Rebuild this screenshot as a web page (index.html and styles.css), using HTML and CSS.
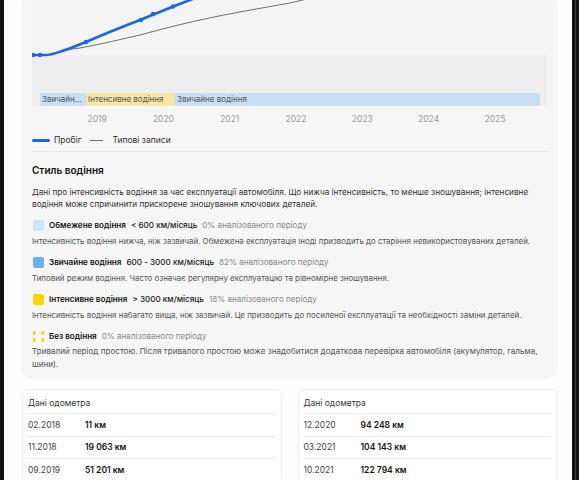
FILE: index.html
```html
<!DOCTYPE html>
<html lang="uk">
<head>
<meta charset="utf-8">
<title>Пробіг</title>
<link rel="stylesheet" href="styles.css">
</head>
<body>
<div class="frame">
  <div class="edge-l"></div>
  <main class="page">
    <section class="card chart-card">
      <div class="plot">
        <svg class="lines" width="514" height="93" viewBox="0 0 514 93">
          <path d="M23 53 C 33 50, 40 49, 48 48 C 70 44, 90 39, 108 35 C 130 29, 150 24, 168 20 C 200 13, 230 8, 258 3 L 275 -1" fill="none" stroke="#6f6f6f" stroke-width="1"/>
          <path d="M0 55 L 13 55 C 20 55, 24 53, 30 51 C 40 48, 46 45, 54 42 C 70 35, 90 27, 108 20 C 118 16, 130 11, 140 7 C 150 3, 158 0, 166 -3" fill="none" stroke="#1666ee" stroke-width="2.6" stroke-linecap="round"/>
          <g fill="#1666ee">
            <circle cx="1" cy="55" r="2.2"/>
            <circle cx="8" cy="55" r="2.2"/>
            <circle cx="54" cy="42" r="2.2"/>
            <circle cx="109" cy="20" r="2.2"/>
            <circle cx="121" cy="14" r="2.2"/>
            <circle cx="141" cy="6.5" r="2.2"/>
          </g>
        </svg>
        <div class="band">
          <span class="seg seg-normal seg-a">Звичайне водіння</span>
          <span class="seg seg-int seg-b">Інтенсивне водіння</span>
          <span class="seg seg-normal seg-c">Звичайне водіння</span>
        </div>
      </div>
      <div class="years">
        <span>2019</span><span>2020</span><span>2021</span><span>2022</span><span>2023</span><span>2024</span><span>2025</span>
      </div>
      <div class="legend">
        <span class="lg-item"><i class="lg-line lg-blue"></i>Пробіг</span>
        <span class="lg-item"><i class="lg-line lg-grey"></i>Типові записи</span>
      </div>
      <div class="style">
        <h2 class="style-title">Стиль водіння</h2>
        <p class="style-desc">Дані про інтенсивність водіння за час експлуатації автомобіля. Що нижча інтенсивність, то менше зношування; інтенсивне водіння може спричинити прискорене зношування ключових деталей.</p>
        <div class="item">
          <div class="item-head"><i class="sw sw-low"></i><b>Обмежене водіння</b><span class="range">&lt; 600 км/місяць</span><span class="pct">0% аналізованого періоду</span></div>
          <p class="item-desc">Інтенсивність водіння нижча, ніж зазвичай. Обмежена експлуатація іноді призводить до старіння невикористовуваних деталей.</p>
        </div>
        <div class="item">
          <div class="item-head"><i class="sw sw-norm"></i><b>Звичайне водіння</b><span class="range">600 - 3000 км/місяць</span><span class="pct">82% аналізованого періоду</span></div>
          <p class="item-desc">Типовий режим водіння. Часто означає регулярну експлуатацію та рівномірне зношування.</p>
        </div>
        <div class="item">
          <div class="item-head"><i class="sw sw-int"></i><b>Інтенсивне водіння</b><span class="range">&gt; 3000 км/місяць</span><span class="pct">18% аналізованого періоду</span></div>
          <p class="item-desc">Інтенсивність водіння набагато вища, ніж зазвичай. Це призводить до посиленої експлуатації та необхідності заміни деталей.</p>
        </div>
        <div class="item">
          <div class="item-head"><svg class="sw sw-none" width="11" height="11" viewBox="0 0 11 11"><g fill="#fbd500"><rect x="0" y="0" width="2.5" height="3.8"/><rect x="0" y="7.2" width="2.5" height="3.8"/><rect x="8.5" y="0" width="2.5" height="3.8"/><rect x="8.5" y="7.2" width="2.5" height="3.8"/></g></svg><b>Без водіння</b><span class="pct">0% аналізованого періоду</span></div>
          <p class="item-desc item-desc-last">Тривалий період простою. Після тривалого простою може знадобитися додаткова перевірка автомобіля (акумулятор, гальма, шини).</p>
        </div>
      </div>
    </section>
    <div class="odo-grid">
      <section class="odo">
        <div class="odo-head">Дані одометра</div>
        <div class="odo-row"><span class="odo-date">02.2018</span><span class="odo-val">11 км</span></div>
        <div class="odo-row"><span class="odo-date">11.2018</span><span class="odo-val">19 063 км</span></div>
        <div class="odo-row"><span class="odo-date">09.2019</span><span class="odo-val">51 201 км</span></div>
      </section>
      <section class="odo">
        <div class="odo-head">Дані одометра</div>
        <div class="odo-row"><span class="odo-date">12.2020</span><span class="odo-val">94 248 км</span></div>
        <div class="odo-row"><span class="odo-date">03.2021</span><span class="odo-val">104 143 км</span></div>
        <div class="odo-row"><span class="odo-date">10.2021</span><span class="odo-val">122 794 км</span></div>
      </section>
    </div>
  </main>
  <div class="edge-r"></div>
</div>
</body>
</html>
```

FILE: styles.css
```css
* { box-sizing: border-box; }
html, body { margin: 0; padding: 0; }
body {
  font-family: Inter, "Noto Sans", "DejaVu Sans", sans-serif;
  color: #222;
  background: #fff;
  width: 579px;
  height: 480px;
  overflow: hidden;
}
.frame {
  display: flex;
  height: 480px;
}
.edge-l {
  width: 4px;
  flex: none;
  background: #131313;
}
.edge-r {
  width: 7px;
  flex: none;
  background: #131313;
  position: relative;
}
.edge-r::after {
  content: "";
  position: absolute;
  left: 3px;
  top: 0;
  bottom: 0;
  width: 1px;
  background: #3a3a3a;
}
.page {
  flex: 1;
  padding: 0 15px 0 18px;
  background: #fdfdfd;
}

.card {
  background: #f6f6f6;
  border-radius: 0 0 10px 10px;
  box-shadow: 0 1px 3px rgba(0,0,0,0.06);
}
.chart-card {
  padding: 0 10px 6px 10px;
}
.plot {
  height: 106px;
  background: linear-gradient(#f4f4f4 0, #f4f4f4 55px, #eeeeee 55px);
  display: flex;
  flex-direction: column;
}
.lines {
  display: block;
  overflow: hidden;
}
.band {
  display: flex;
  height: 13px;
  margin: 0 7px 0 8px;
  font-size: 8px;
  line-height: 13px;
  color: #555;
}
.seg {
  white-space: nowrap;
  overflow: hidden;
  text-overflow: ellipsis;
  padding-left: 2px;
}
.seg-normal { background: #c6dff4; }
.seg-int { background: #f6e7a4; }
.seg-a { width: 46px; flex: none; }
.seg-b { width: 89px; flex: none; }
.seg-c { flex: 1; border-radius: 0 2px 2px 0; }

.years {
  display: grid;
  grid-template-columns: repeat(7, 66.3px);
  padding-left: 32px;
  margin-top: 7px;
  font-size: 8.5px;
  line-height: 12px;
  color: #9a9a9a;
}
.years span { text-align: center; }

.legend {
  display: flex;
  gap: 9px;
  margin-top: 9px;
  font-size: 8.5px;
  line-height: 12px;
  color: #333;
  padding-bottom: 5px;
  border-bottom: 1px solid #e6e6e6;
}
.lg-item {
  display: flex;
  align-items: center;
  gap: 4px;
}
.lg-line { display: block; }
.lg-blue {
  width: 18px;
  height: 3px;
  border-radius: 2px;
  background: #1666ee;
}
.lg-grey {
  width: 13px;
  height: 1px;
  background: #6f6f6f;
  margin-right: 5px;
}

.style {
  padding-top: 11px;
}
.style-title {
  margin: 0;
  font-size: 10px;
  line-height: 14px;
  font-weight: 600;
  color: #111;
}
.style-desc {
  margin: 9px 0 0;
  font-size: 8.2px;
  line-height: 12px;
  color: #333;
}
.item { margin-top: 9px; }
.item-head {
  display: flex;
  align-items: center;
  font-size: 8.1px;
  line-height: 12px;
  white-space: nowrap;
}
.item-head b {
  font-weight: 600;
  color: #111;
}
.range {
  font-weight: 500;
  color: #222;
  margin-left: 5px;
}
.pct {
  color: #888;
  margin-left: 5px;
}
.sw {
  display: block;
  width: 11px;
  height: 11px;
  border-radius: 2px;
  margin: 0 5px 0 1px;
  flex: none;
}
.sw-low { background: #cde4f8; }
.sw-norm { background: #69aef0; }
.sw-int { background: #fbd500; }
.sw-none { border-radius: 0; }
.item-desc {
  margin: 4px 0 0;
  font-size: 7.9px;
  line-height: 12px;
  color: #555;
}
.item-desc-last {
  font-size: 8.1px;
  line-height: 13px;
  margin-top: 3px;
}

.odo-grid {
  display: grid;
  grid-template-columns: 1fr 1fr;
  gap: 16px;
  margin-top: 12px;
}
.odo {
  background: #fff;
  border: 1px solid #f0f0f0;
  border-radius: 6px;
  padding: 6px 6px 0 4px;
  box-shadow: 0 1px 2px rgba(0,0,0,0.03);
}
.odo-head {
  font-size: 8.5px;
  line-height: 12px;
  color: #333;
  padding: 1px 0 4px 1px;
  border-bottom: 1px solid #ececec;
}
.odo-row {
  display: flex;
  align-items: center;
  height: 22.5px;
  padding-left: 1px;
  font-size: 8.5px;
  border-bottom: 1px solid #ececec;
}
.odo-date {
  width: 57px;
  color: #444;
}
.odo-val {
  font-weight: 600;
  color: #111;
}
```
